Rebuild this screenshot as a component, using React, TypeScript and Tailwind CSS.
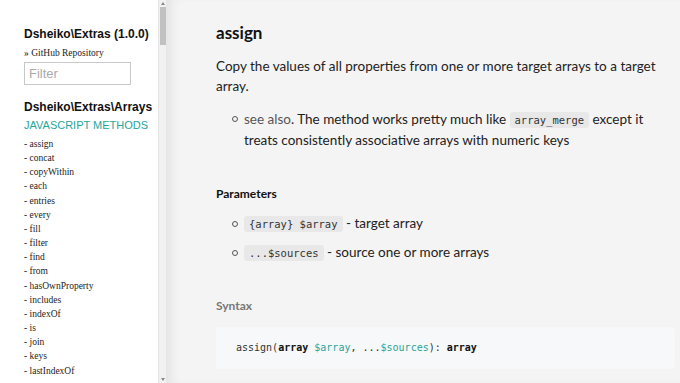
import React from 'react';

const methods = [
  'assign', 'concat', 'copyWithin', 'each', 'entries', 'every', 'fill', 'filter', 'find',
  'from', 'hasOwnProperty', 'includes', 'indexOf', 'is', 'join', 'keys', 'lastIndexOf',
];

const sans = { fontFamily: 'Lato, "Noto Sans", sans-serif' };

function Code({ children }: { children: React.ReactNode }) {
  return (
    <code className="rounded-[3px] bg-[#e8e8e8] px-[5px] py-[2px] font-['DejaVu_Sans_Mono',monospace] text-[10.5px] text-[#333]">
      {children}
    </code>
  );
}

function Sidebar() {
  return (
    <aside className="flex h-full w-[166px] shrink-0 bg-white">
      <div className="flex-1 overflow-hidden whitespace-nowrap pl-6 pt-[26px] font-['Liberation_Sans',sans-serif] text-[#111]">
        <h1 className="text-[12px] font-bold leading-4">Dsheiko\Extras (1.0.0)</h1>
        <p className="mt-[5px] font-['Liberation_Serif',serif] text-[9.5px] leading-[12px] text-[#222]">» GitHub Repository</p>
        <input
          placeholder="Filter"
          className="mt-[3px] h-[23px] w-[107px] border border-[#c8c8c8] px-[4px] text-[13px] text-[#333] placeholder:text-[#aaa] outline-none"
        />
        <h2 className="mt-[14px] text-[12px] font-bold leading-4">Dsheiko\Extras\Arrays</h2>
        <div className="mt-[3px] text-[11px] leading-[14px] text-[#26a69a]">JAVASCRIPT METHODS</div>
        <ul className="mt-[5px] font-['Liberation_Serif',serif] text-[9.5px] leading-[14.15px] text-[#222]">
          {methods.map((m) => (
            <li key={m}>- {m}</li>
          ))}
        </ul>
      </div>
      {/* scrollbar */}
      <div className="flex w-[8px] flex-col items-center border-l border-[#e6e6e6] bg-[#f1f1f1]">
        <div className="mt-[2px] h-0 w-0 border-x-[2.5px] border-b-[3px] border-x-transparent border-b-[#888]" />
        <div className="mt-[2px] h-[38px] w-[6px] bg-[#c1c1c1]" />
        <div className="flex-1" />
        <div className="mb-[2px] h-0 w-0 border-x-[2.5px] border-t-[3px] border-x-transparent border-t-[#888]" />
      </div>
    </aside>
  );
}

export default function App() {
  return (
    <div className="flex h-[383px] w-[680px] overflow-hidden bg-[#f4f4f4]">
      <Sidebar />
      <main
        className="flex-1 overflow-hidden pl-[50px] pr-[5px] pt-[20px] text-[#222] shadow-[inset_10px_0_12px_-6px_rgba(0,0,0,0.08)]"
        style={sans}
      >
        <h1 className="text-[17px] font-bold leading-[26px] text-[#111]">assign</h1>
        <div className="max-w-[450px]">
          <p className="mt-[10px] text-[13.5px] leading-[20px]">
            Copy the values of all properties from one or more target arrays to a target array.
          </p>
          <ul className="mt-[13px] pl-[16px] text-[13.5px] leading-[20px]">
            <li className="flex gap-[6px]">
              <span className="mt-[7px] h-[6px] w-[6px] shrink-0 rounded-full border border-[#555]" />
              <span>
                <span className="text-[#555]">see also</span>. The method works pretty much like <Code>array_merge</Code> except it treats consistently associative arrays with numeric keys
              </span>
            </li>
          </ul>
        </div>
        <h3 className="mt-[36px] text-[12px] font-bold leading-[16px] text-[#111]">Parameters</h3>
        <ul className="mt-[11px] space-y-[8px] pl-[16px] text-[13.5px] leading-[20px]">
          <li className="flex items-center gap-[6px]">
            <span className="h-[6px] w-[6px] shrink-0 rounded-full border border-[#555]" />
            <span><Code>{'{array} $array'}</Code> - target array</span>
          </li>
          <li className="flex items-center gap-[6px]">
            <span className="h-[6px] w-[6px] shrink-0 rounded-full border border-[#555]" />
            <span><Code>...$sources</Code> - source one or more arrays</span>
          </li>
        </ul>
        <h3 className="mt-[35px] text-[12px] font-bold leading-[16px] text-[#777]">Syntax</h3>
        <pre className="mt-[13px] h-[42px] rounded-[3px] bg-[#f7f8f9] px-[20px] pt-[13px] font-['DejaVu_Sans_Mono',monospace] text-[10px] leading-[16px] text-[#333]">
          assign(<span className="font-bold text-[#111]">array</span> <span className="text-[#26a69a]">$array</span>, ...<span className="text-[#26a69a]">$sources</span>): <span className="font-bold text-[#111]">array</span>
        </pre>
      </main>
    </div>
  );
}
